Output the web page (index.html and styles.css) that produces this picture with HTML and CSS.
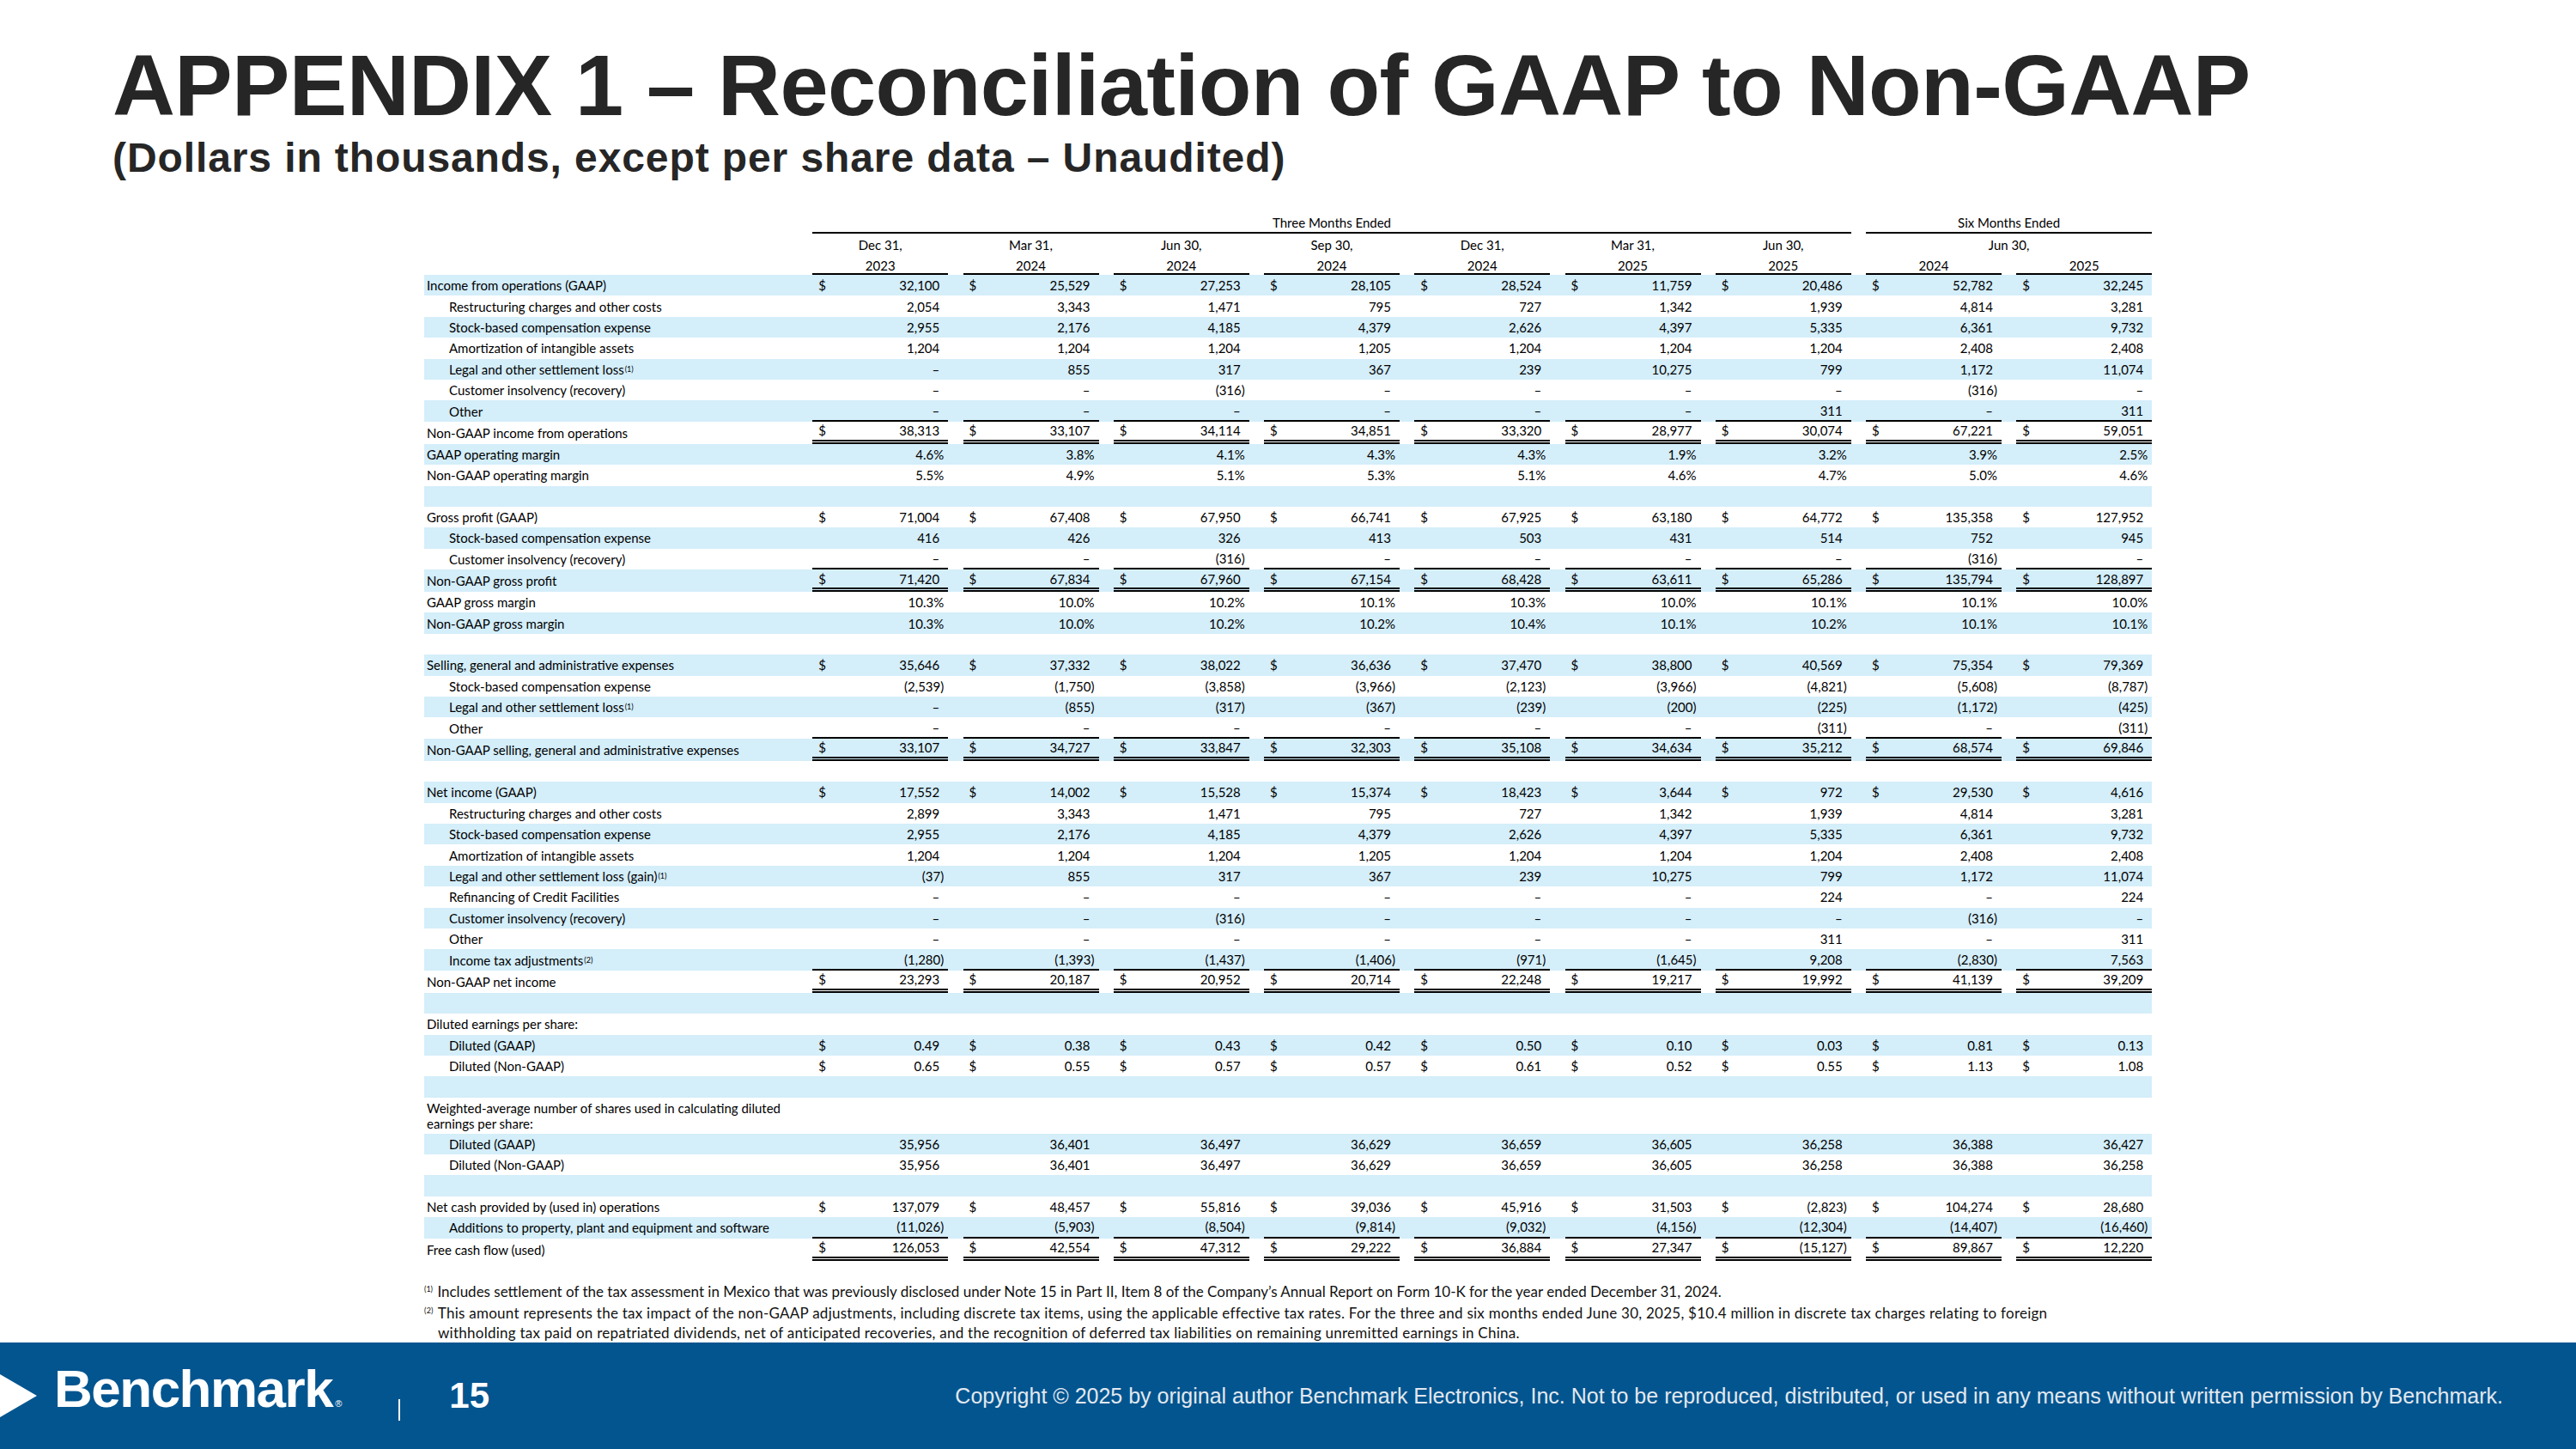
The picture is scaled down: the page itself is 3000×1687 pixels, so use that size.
FILE: index.html
```html
<!DOCTYPE html>
<html lang="en">
<head>
<meta charset="utf-8">
<title>APPENDIX 1 – Reconciliation of GAAP to Non-GAAP</title>
<link rel="stylesheet" href="styles.css">
</head>
<body>
<div class="slide">
  <header class="head">
    <h1 class="title">APPENDIX 1 – Reconciliation of GAAP to Non-GAAP</h1>
    <div class="sub">(Dollars in thousands, except per share data – Unaudited)</div>
  </header>

  <section class="sheet">
    <div class="hr ha"><div></div><div class="g3">Three Months Ended</div><div class="g6">Six Months Ended</div></div>
    <div class="hr hb"><div></div><div class="hc">Dec 31,</div><div class="hc">Mar 31,</div><div class="hc">Jun 30,</div><div class="hc">Sep 30,</div><div class="hc">Dec 31,</div><div class="hc">Mar 31,</div><div class="hc">Jun 30,</div><div class="hc g6">Jun 30,</div></div>
    <div class="hr hy"><div></div><div class="hc">2023</div><div class="hc">2024</div><div class="hc">2024</div><div class="hc">2024</div><div class="hc">2024</div><div class="hc">2025</div><div class="hc">2025</div><div class="hc">2024</div><div class="hc">2025</div></div>

    <!-- Income from operations -->
    <div class="r b"><div class="l">Income from operations (GAAP)</div><div class="c"><span>$</span><span class="v">32,100</span></div><div class="c"><span>$</span><span class="v">25,529</span></div><div class="c"><span>$</span><span class="v">27,253</span></div><div class="c"><span>$</span><span class="v">28,105</span></div><div class="c"><span>$</span><span class="v">28,524</span></div><div class="c"><span>$</span><span class="v">11,759</span></div><div class="c"><span>$</span><span class="v">20,486</span></div><div class="c"><span>$</span><span class="v">52,782</span></div><div class="c"><span>$</span><span class="v">32,245</span></div></div>
    <div class="r"><div class="l in">Restructuring charges and other costs</div><div class="c"><span class="v">2,054</span></div><div class="c"><span class="v">3,343</span></div><div class="c"><span class="v">1,471</span></div><div class="c"><span class="v">795</span></div><div class="c"><span class="v">727</span></div><div class="c"><span class="v">1,342</span></div><div class="c"><span class="v">1,939</span></div><div class="c"><span class="v">4,814</span></div><div class="c"><span class="v">3,281</span></div></div>
    <div class="r b"><div class="l in">Stock-based compensation expense</div><div class="c"><span class="v">2,955</span></div><div class="c"><span class="v">2,176</span></div><div class="c"><span class="v">4,185</span></div><div class="c"><span class="v">4,379</span></div><div class="c"><span class="v">2,626</span></div><div class="c"><span class="v">4,397</span></div><div class="c"><span class="v">5,335</span></div><div class="c"><span class="v">6,361</span></div><div class="c"><span class="v">9,732</span></div></div>
    <div class="r"><div class="l in">Amortization of intangible assets</div><div class="c"><span class="v">1,204</span></div><div class="c"><span class="v">1,204</span></div><div class="c"><span class="v">1,204</span></div><div class="c"><span class="v">1,205</span></div><div class="c"><span class="v">1,204</span></div><div class="c"><span class="v">1,204</span></div><div class="c"><span class="v">1,204</span></div><div class="c"><span class="v">2,408</span></div><div class="c"><span class="v">2,408</span></div></div>
    <div class="r b"><div class="l in">Legal and other settlement loss<sup>(1)</sup></div><div class="c"><span class="v">–</span></div><div class="c"><span class="v">855</span></div><div class="c"><span class="v">317</span></div><div class="c"><span class="v">367</span></div><div class="c"><span class="v">239</span></div><div class="c"><span class="v">10,275</span></div><div class="c"><span class="v">799</span></div><div class="c"><span class="v">1,172</span></div><div class="c"><span class="v">11,074</span></div></div>
    <div class="r"><div class="l in">Customer insolvency (recovery)</div><div class="c"><span class="v">–</span></div><div class="c"><span class="v">–</span></div><div class="c"><span class="v n">(316)</span></div><div class="c"><span class="v">–</span></div><div class="c"><span class="v">–</span></div><div class="c"><span class="v">–</span></div><div class="c"><span class="v">–</span></div><div class="c"><span class="v n">(316)</span></div><div class="c"><span class="v">–</span></div></div>
    <div class="r b u"><div class="l in">Other</div><div class="c"><span class="v">–</span></div><div class="c"><span class="v">–</span></div><div class="c"><span class="v">–</span></div><div class="c"><span class="v">–</span></div><div class="c"><span class="v">–</span></div><div class="c"><span class="v">–</span></div><div class="c"><span class="v">311</span></div><div class="c"><span class="v">–</span></div><div class="c"><span class="v">311</span></div></div>
    <div class="r t"><div class="l">Non-GAAP income from operations</div><div class="c"><span>$</span><span class="v">38,313</span></div><div class="c"><span>$</span><span class="v">33,107</span></div><div class="c"><span>$</span><span class="v">34,114</span></div><div class="c"><span>$</span><span class="v">34,851</span></div><div class="c"><span>$</span><span class="v">33,320</span></div><div class="c"><span>$</span><span class="v">28,977</span></div><div class="c"><span>$</span><span class="v">30,074</span></div><div class="c"><span>$</span><span class="v">67,221</span></div><div class="c"><span>$</span><span class="v">59,051</span></div></div>
    <div class="r b"><div class="l">GAAP operating margin</div><div class="c"><span class="v p">4.6%</span></div><div class="c"><span class="v p">3.8%</span></div><div class="c"><span class="v p">4.1%</span></div><div class="c"><span class="v p">4.3%</span></div><div class="c"><span class="v p">4.3%</span></div><div class="c"><span class="v p">1.9%</span></div><div class="c"><span class="v p">3.2%</span></div><div class="c"><span class="v p">3.9%</span></div><div class="c"><span class="v p">2.5%</span></div></div>
    <div class="r"><div class="l">Non-GAAP operating margin</div><div class="c"><span class="v p">5.5%</span></div><div class="c"><span class="v p">4.9%</span></div><div class="c"><span class="v p">5.1%</span></div><div class="c"><span class="v p">5.3%</span></div><div class="c"><span class="v p">5.1%</span></div><div class="c"><span class="v p">4.6%</span></div><div class="c"><span class="v p">4.7%</span></div><div class="c"><span class="v p">5.0%</span></div><div class="c"><span class="v p">4.6%</span></div></div>
    <div class="r b"></div>

    <!-- Gross profit -->
    <div class="r"><div class="l">Gross profit (GAAP)</div><div class="c"><span>$</span><span class="v">71,004</span></div><div class="c"><span>$</span><span class="v">67,408</span></div><div class="c"><span>$</span><span class="v">67,950</span></div><div class="c"><span>$</span><span class="v">66,741</span></div><div class="c"><span>$</span><span class="v">67,925</span></div><div class="c"><span>$</span><span class="v">63,180</span></div><div class="c"><span>$</span><span class="v">64,772</span></div><div class="c"><span>$</span><span class="v">135,358</span></div><div class="c"><span>$</span><span class="v">127,952</span></div></div>
    <div class="r b"><div class="l in">Stock-based compensation expense</div><div class="c"><span class="v">416</span></div><div class="c"><span class="v">426</span></div><div class="c"><span class="v">326</span></div><div class="c"><span class="v">413</span></div><div class="c"><span class="v">503</span></div><div class="c"><span class="v">431</span></div><div class="c"><span class="v">514</span></div><div class="c"><span class="v">752</span></div><div class="c"><span class="v">945</span></div></div>
    <div class="r u"><div class="l in">Customer insolvency (recovery)</div><div class="c"><span class="v">–</span></div><div class="c"><span class="v">–</span></div><div class="c"><span class="v n">(316)</span></div><div class="c"><span class="v">–</span></div><div class="c"><span class="v">–</span></div><div class="c"><span class="v">–</span></div><div class="c"><span class="v">–</span></div><div class="c"><span class="v n">(316)</span></div><div class="c"><span class="v">–</span></div></div>
    <div class="r b t"><div class="l">Non-GAAP gross profit</div><div class="c"><span>$</span><span class="v">71,420</span></div><div class="c"><span>$</span><span class="v">67,834</span></div><div class="c"><span>$</span><span class="v">67,960</span></div><div class="c"><span>$</span><span class="v">67,154</span></div><div class="c"><span>$</span><span class="v">68,428</span></div><div class="c"><span>$</span><span class="v">63,611</span></div><div class="c"><span>$</span><span class="v">65,286</span></div><div class="c"><span>$</span><span class="v">135,794</span></div><div class="c"><span>$</span><span class="v">128,897</span></div></div>
    <div class="r"><div class="l">GAAP gross margin</div><div class="c"><span class="v p">10.3%</span></div><div class="c"><span class="v p">10.0%</span></div><div class="c"><span class="v p">10.2%</span></div><div class="c"><span class="v p">10.1%</span></div><div class="c"><span class="v p">10.3%</span></div><div class="c"><span class="v p">10.0%</span></div><div class="c"><span class="v p">10.1%</span></div><div class="c"><span class="v p">10.1%</span></div><div class="c"><span class="v p">10.0%</span></div></div>
    <div class="r b"><div class="l">Non-GAAP gross margin</div><div class="c"><span class="v p">10.3%</span></div><div class="c"><span class="v p">10.0%</span></div><div class="c"><span class="v p">10.2%</span></div><div class="c"><span class="v p">10.2%</span></div><div class="c"><span class="v p">10.4%</span></div><div class="c"><span class="v p">10.1%</span></div><div class="c"><span class="v p">10.2%</span></div><div class="c"><span class="v p">10.1%</span></div><div class="c"><span class="v p">10.1%</span></div></div>
    <div class="r"></div>

    <!-- SG&A -->
    <div class="r b"><div class="l">Selling, general and administrative expenses</div><div class="c"><span>$</span><span class="v">35,646</span></div><div class="c"><span>$</span><span class="v">37,332</span></div><div class="c"><span>$</span><span class="v">38,022</span></div><div class="c"><span>$</span><span class="v">36,636</span></div><div class="c"><span>$</span><span class="v">37,470</span></div><div class="c"><span>$</span><span class="v">38,800</span></div><div class="c"><span>$</span><span class="v">40,569</span></div><div class="c"><span>$</span><span class="v">75,354</span></div><div class="c"><span>$</span><span class="v">79,369</span></div></div>
    <div class="r"><div class="l in">Stock-based compensation expense</div><div class="c"><span class="v n">(2,539)</span></div><div class="c"><span class="v n">(1,750)</span></div><div class="c"><span class="v n">(3,858)</span></div><div class="c"><span class="v n">(3,966)</span></div><div class="c"><span class="v n">(2,123)</span></div><div class="c"><span class="v n">(3,966)</span></div><div class="c"><span class="v n">(4,821)</span></div><div class="c"><span class="v n">(5,608)</span></div><div class="c"><span class="v n">(8,787)</span></div></div>
    <div class="r b"><div class="l in">Legal and other settlement loss<sup>(1)</sup></div><div class="c"><span class="v">–</span></div><div class="c"><span class="v n">(855)</span></div><div class="c"><span class="v n">(317)</span></div><div class="c"><span class="v n">(367)</span></div><div class="c"><span class="v n">(239)</span></div><div class="c"><span class="v n">(200)</span></div><div class="c"><span class="v n">(225)</span></div><div class="c"><span class="v n">(1,172)</span></div><div class="c"><span class="v n">(425)</span></div></div>
    <div class="r u"><div class="l in">Other</div><div class="c"><span class="v">–</span></div><div class="c"><span class="v">–</span></div><div class="c"><span class="v">–</span></div><div class="c"><span class="v">–</span></div><div class="c"><span class="v">–</span></div><div class="c"><span class="v">–</span></div><div class="c"><span class="v n">(311)</span></div><div class="c"><span class="v">–</span></div><div class="c"><span class="v n">(311)</span></div></div>
    <div class="r b t"><div class="l">Non-GAAP selling, general and administrative expenses</div><div class="c"><span>$</span><span class="v">33,107</span></div><div class="c"><span>$</span><span class="v">34,727</span></div><div class="c"><span>$</span><span class="v">33,847</span></div><div class="c"><span>$</span><span class="v">32,303</span></div><div class="c"><span>$</span><span class="v">35,108</span></div><div class="c"><span>$</span><span class="v">34,634</span></div><div class="c"><span>$</span><span class="v">35,212</span></div><div class="c"><span>$</span><span class="v">68,574</span></div><div class="c"><span>$</span><span class="v">69,846</span></div></div>
    <div class="r"></div>

    <!-- Net income -->
    <div class="r b"><div class="l">Net income (GAAP)</div><div class="c"><span>$</span><span class="v">17,552</span></div><div class="c"><span>$</span><span class="v">14,002</span></div><div class="c"><span>$</span><span class="v">15,528</span></div><div class="c"><span>$</span><span class="v">15,374</span></div><div class="c"><span>$</span><span class="v">18,423</span></div><div class="c"><span>$</span><span class="v">3,644</span></div><div class="c"><span>$</span><span class="v">972</span></div><div class="c"><span>$</span><span class="v">29,530</span></div><div class="c"><span>$</span><span class="v">4,616</span></div></div>
    <div class="r"><div class="l in">Restructuring charges and other costs</div><div class="c"><span class="v">2,899</span></div><div class="c"><span class="v">3,343</span></div><div class="c"><span class="v">1,471</span></div><div class="c"><span class="v">795</span></div><div class="c"><span class="v">727</span></div><div class="c"><span class="v">1,342</span></div><div class="c"><span class="v">1,939</span></div><div class="c"><span class="v">4,814</span></div><div class="c"><span class="v">3,281</span></div></div>
    <div class="r b"><div class="l in">Stock-based compensation expense</div><div class="c"><span class="v">2,955</span></div><div class="c"><span class="v">2,176</span></div><div class="c"><span class="v">4,185</span></div><div class="c"><span class="v">4,379</span></div><div class="c"><span class="v">2,626</span></div><div class="c"><span class="v">4,397</span></div><div class="c"><span class="v">5,335</span></div><div class="c"><span class="v">6,361</span></div><div class="c"><span class="v">9,732</span></div></div>
    <div class="r"><div class="l in">Amortization of intangible assets</div><div class="c"><span class="v">1,204</span></div><div class="c"><span class="v">1,204</span></div><div class="c"><span class="v">1,204</span></div><div class="c"><span class="v">1,205</span></div><div class="c"><span class="v">1,204</span></div><div class="c"><span class="v">1,204</span></div><div class="c"><span class="v">1,204</span></div><div class="c"><span class="v">2,408</span></div><div class="c"><span class="v">2,408</span></div></div>
    <div class="r b"><div class="l in">Legal and other settlement loss (gain)<sup>(1)</sup></div><div class="c"><span class="v n">(37)</span></div><div class="c"><span class="v">855</span></div><div class="c"><span class="v">317</span></div><div class="c"><span class="v">367</span></div><div class="c"><span class="v">239</span></div><div class="c"><span class="v">10,275</span></div><div class="c"><span class="v">799</span></div><div class="c"><span class="v">1,172</span></div><div class="c"><span class="v">11,074</span></div></div>
    <div class="r"><div class="l in">Refinancing of Credit Facilities</div><div class="c"><span class="v">–</span></div><div class="c"><span class="v">–</span></div><div class="c"><span class="v">–</span></div><div class="c"><span class="v">–</span></div><div class="c"><span class="v">–</span></div><div class="c"><span class="v">–</span></div><div class="c"><span class="v">224</span></div><div class="c"><span class="v">–</span></div><div class="c"><span class="v">224</span></div></div>
    <div class="r b"><div class="l in">Customer insolvency (recovery)</div><div class="c"><span class="v">–</span></div><div class="c"><span class="v">–</span></div><div class="c"><span class="v n">(316)</span></div><div class="c"><span class="v">–</span></div><div class="c"><span class="v">–</span></div><div class="c"><span class="v">–</span></div><div class="c"><span class="v">–</span></div><div class="c"><span class="v n">(316)</span></div><div class="c"><span class="v">–</span></div></div>
    <div class="r"><div class="l in">Other</div><div class="c"><span class="v">–</span></div><div class="c"><span class="v">–</span></div><div class="c"><span class="v">–</span></div><div class="c"><span class="v">–</span></div><div class="c"><span class="v">–</span></div><div class="c"><span class="v">–</span></div><div class="c"><span class="v">311</span></div><div class="c"><span class="v">–</span></div><div class="c"><span class="v">311</span></div></div>
    <div class="r b u"><div class="l in">Income tax adjustments<sup>(2)</sup></div><div class="c"><span class="v n">(1,280)</span></div><div class="c"><span class="v n">(1,393)</span></div><div class="c"><span class="v n">(1,437)</span></div><div class="c"><span class="v n">(1,406)</span></div><div class="c"><span class="v n">(971)</span></div><div class="c"><span class="v n">(1,645)</span></div><div class="c"><span class="v">9,208</span></div><div class="c"><span class="v n">(2,830)</span></div><div class="c"><span class="v">7,563</span></div></div>
    <div class="r t"><div class="l">Non-GAAP net income</div><div class="c"><span>$</span><span class="v">23,293</span></div><div class="c"><span>$</span><span class="v">20,187</span></div><div class="c"><span>$</span><span class="v">20,952</span></div><div class="c"><span>$</span><span class="v">20,714</span></div><div class="c"><span>$</span><span class="v">22,248</span></div><div class="c"><span>$</span><span class="v">19,217</span></div><div class="c"><span>$</span><span class="v">19,992</span></div><div class="c"><span>$</span><span class="v">41,139</span></div><div class="c"><span>$</span><span class="v">39,209</span></div></div>
    <div class="r b"></div>

    <!-- EPS -->
    <div class="r"><div class="l">Diluted earnings per share:</div></div>
    <div class="r b"><div class="l in">Diluted (GAAP)</div><div class="c"><span>$</span><span class="v">0.49</span></div><div class="c"><span>$</span><span class="v">0.38</span></div><div class="c"><span>$</span><span class="v">0.43</span></div><div class="c"><span>$</span><span class="v">0.42</span></div><div class="c"><span>$</span><span class="v">0.50</span></div><div class="c"><span>$</span><span class="v">0.10</span></div><div class="c"><span>$</span><span class="v">0.03</span></div><div class="c"><span>$</span><span class="v">0.81</span></div><div class="c"><span>$</span><span class="v">0.13</span></div></div>
    <div class="r"><div class="l in">Diluted (Non-GAAP)</div><div class="c"><span>$</span><span class="v">0.65</span></div><div class="c"><span>$</span><span class="v">0.55</span></div><div class="c"><span>$</span><span class="v">0.57</span></div><div class="c"><span>$</span><span class="v">0.57</span></div><div class="c"><span>$</span><span class="v">0.61</span></div><div class="c"><span>$</span><span class="v">0.52</span></div><div class="c"><span>$</span><span class="v">0.55</span></div><div class="c"><span>$</span><span class="v">1.13</span></div><div class="c"><span>$</span><span class="v">1.08</span></div></div>
    <div class="r b"></div>

    <!-- Shares -->
    <div class="r tall"><div class="l wrap">Weighted-average number of shares used in calculating diluted<br>earnings per share:</div></div>
    <div class="r b"><div class="l in">Diluted (GAAP)</div><div class="c"><span class="v">35,956</span></div><div class="c"><span class="v">36,401</span></div><div class="c"><span class="v">36,497</span></div><div class="c"><span class="v">36,629</span></div><div class="c"><span class="v">36,659</span></div><div class="c"><span class="v">36,605</span></div><div class="c"><span class="v">36,258</span></div><div class="c"><span class="v">36,388</span></div><div class="c"><span class="v">36,427</span></div></div>
    <div class="r"><div class="l in">Diluted (Non-GAAP)</div><div class="c"><span class="v">35,956</span></div><div class="c"><span class="v">36,401</span></div><div class="c"><span class="v">36,497</span></div><div class="c"><span class="v">36,629</span></div><div class="c"><span class="v">36,659</span></div><div class="c"><span class="v">36,605</span></div><div class="c"><span class="v">36,258</span></div><div class="c"><span class="v">36,388</span></div><div class="c"><span class="v">36,258</span></div></div>
    <div class="r b"></div>

    <!-- Cash flow -->
    <div class="r"><div class="l">Net cash provided by (used in) operations</div><div class="c"><span>$</span><span class="v">137,079</span></div><div class="c"><span>$</span><span class="v">48,457</span></div><div class="c"><span>$</span><span class="v">55,816</span></div><div class="c"><span>$</span><span class="v">39,036</span></div><div class="c"><span>$</span><span class="v">45,916</span></div><div class="c"><span>$</span><span class="v">31,503</span></div><div class="c"><span>$</span><span class="v n">(2,823)</span></div><div class="c"><span>$</span><span class="v">104,274</span></div><div class="c"><span>$</span><span class="v">28,680</span></div></div>
    <div class="r b u"><div class="l in">Additions to property, plant and equipment and software</div><div class="c"><span class="v n">(11,026)</span></div><div class="c"><span class="v n">(5,903)</span></div><div class="c"><span class="v n">(8,504)</span></div><div class="c"><span class="v n">(9,814)</span></div><div class="c"><span class="v n">(9,032)</span></div><div class="c"><span class="v n">(4,156)</span></div><div class="c"><span class="v n">(12,304)</span></div><div class="c"><span class="v n">(14,407)</span></div><div class="c"><span class="v n">(16,460)</span></div></div>
    <div class="r t"><div class="l">Free cash flow (used)</div><div class="c"><span>$</span><span class="v">126,053</span></div><div class="c"><span>$</span><span class="v">42,554</span></div><div class="c"><span>$</span><span class="v">47,312</span></div><div class="c"><span>$</span><span class="v">29,222</span></div><div class="c"><span>$</span><span class="v">36,884</span></div><div class="c"><span>$</span><span class="v">27,347</span></div><div class="c"><span>$</span><span class="v n">(15,127)</span></div><div class="c"><span>$</span><span class="v">89,867</span></div><div class="c"><span>$</span><span class="v">12,220</span></div></div>

    <div class="notes">
      <p class="fn"><sup>(1)</sup> Includes settlement of the tax assessment in Mexico that was previously disclosed under Note 15 in Part II, Item 8 of the Company’s Annual Report on Form 10-K for the year ended December 31, 2024.</p>
      <p class="fn fn2"><sup>(2)</sup> This amount represents the tax impact of the non-GAAP adjustments, including discrete tax items, using the applicable effective tax rates. For the three and six months ended June 30, 2025, $10.4 million in discrete tax charges relating to foreign<span class="cont">withholding tax paid on repatriated dividends, net of anticipated recoveries, and the recognition of deferred tax liabilities on remaining unremitted earnings in China.</span></p>
    </div>
  </section>

  <footer class="foot">
    <svg class="chev" width="43" height="50" viewBox="0 0 43 50" aria-hidden="true"><polygon points="0,0 43,25 0,50" fill="#fff"/></svg>
    <div class="logo">Benchmark<span class="reg">®</span></div>
    <div class="sep"></div>
    <div class="pg">15</div>
    <div class="copy">Copyright © 2025 by original author Benchmark Electronics, Inc. Not to be reproduced, distributed, or used in any means without written permission by Benchmark.</div>
  </footer>
</div>
</body>
</html>
```

FILE: styles.css
```css
html, body {
  margin: 0;
  padding: 0;
  background: #ffffff;
}

body {
  width: 3000px;
  height: 1687px;
  overflow: hidden;
  font-family: "Lato", "Noto Sans", sans-serif;
  color: #000;
}

.slide {
  display: flex;
  flex-direction: column;
  height: 1687px;
}

/* ---------- Heading ---------- */
.head {
  padding: 49px 0 0 131px;
  color: #262626;
  font-family: "Liberation Sans", Arial, sans-serif;
  font-weight: 700;
}

.title {
  margin: 0;
  font-size: 101px;
  line-height: 101px;
  font-weight: 700;
  letter-spacing: -0.6px;
  white-space: nowrap;
}

.sub {
  margin-top: 10px;
  font-size: 48px;
  line-height: 47px;
  letter-spacing: 0.9px;
  white-space: nowrap;
}

/* ---------- Table ---------- */
.sheet {
  width: 2012px;
  margin: 41px auto 0;
  font-size: 15px;
}

.hr,
.r {
  display: grid;
  grid-template-columns: 435px repeat(9, 158px);
  column-gap: 17.25px;
}

.hr > div {
  display: flex;
  align-items: center;
  justify-content: center;
  box-sizing: border-box;
  white-space: nowrap;
}

.ha {
  height: 24px;
}

.ha .g3 {
  grid-column: 2 / span 7;
  border-bottom: 2px solid #000;
}

.ha .g6 {
  grid-column: 9 / span 2;
  border-bottom: 2px solid #000;
}

.hb {
  height: 25px;
}

.hb .g6 {
  grid-column: 9 / span 2;
}

.hy {
  height: 23px;
}

.hy .hc {
  border-bottom: 2px solid #000;
  padding-top: 2px;
}

.r {
  height: 24.4px;
  align-items: stretch;
}

.r.b {
  background: #d4eefa;
}

.r.t {
  height: 26px;
}

.r.tall {
  height: 42px;
}

.r > div {
  display: flex;
  align-items: center;
  box-sizing: border-box;
  white-space: nowrap;
}

.l {
  padding-left: 3px;
}

.l.in {
  padding-left: 29px;
}

.l.wrap {
  white-space: normal;
  line-height: 18px;
  align-items: center;
}

.l sup,
.fn sup {
  font-size: 9px;
  line-height: 0;
  vertical-align: 6px;
  margin-left: 1px;
}

.c {
  justify-content: space-between;
  padding: 0 10px 0 7px;
  font-variant-numeric: tabular-nums lining-nums;
}

.c .v {
  margin-left: auto;
}

.c .v.n {
  margin-right: -5px;
}

.c .v.p {
  margin-right: -5px;
}

.r.u > .c {
  border-bottom: 2px solid #000;
}

.r.t > .c {
  border-bottom: 5px double #000;
}

/* ---------- Footnotes ---------- */
.notes {
  margin-top: 23px;
  font-size: 17px;
  line-height: 25px;
  color: #111;
}

.fn {
  margin: 0;
  white-space: nowrap;
}

.fn2 {
  letter-spacing: 0.25px;
}

.fn .cont {
  display: block;
  padding-left: 16px;
  line-height: 21px;
}

.fn sup {
  margin-left: 0;
  margin-right: 1px;
}

/* ---------- Footer ---------- */
.foot {
  margin-top: auto;
  height: 124px;
  background: #03558f;
  display: flex;
  align-items: center;
  color: #fff;
  font-family: "Liberation Sans", Arial, sans-serif;
}

.chev {
  flex: none;
  display: block;
}

.logo {
  margin-left: 20px;
  font-size: 62px;
  line-height: 62px;
  font-weight: 700;
  letter-spacing: -1.5px;
  white-space: nowrap;
}

.logo .reg {
  font-size: 11px;
  letter-spacing: 0;
  margin-left: 3px;
  font-weight: 400;
}

.sep {
  width: 2px;
  height: 25px;
  background: #fff;
  margin: 32px 0 0 66px;
}

.pg {
  margin-left: 57px;
  font-size: 42px;
  line-height: 42px;
  font-weight: 700;
}

.copy {
  margin-left: auto;
  margin-right: 85px;
  font-size: 25px;
  color: #e2e8ef;
  white-space: nowrap;
}
```
